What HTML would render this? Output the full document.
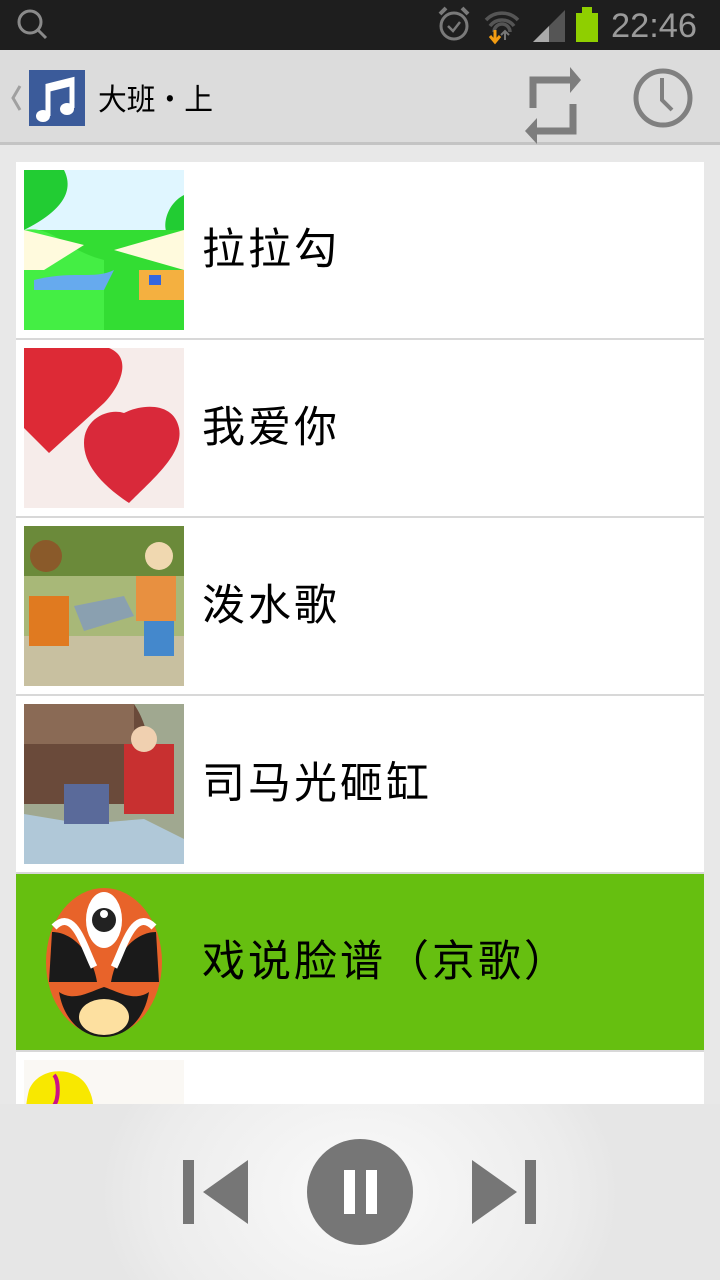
<!DOCTYPE html>
<html><head><meta charset="utf-8">
<style>
*{margin:0;padding:0;box-sizing:border-box}
body{width:720px;height:1280px;overflow:hidden;background:#e8e8e8;font-family:"Liberation Sans","Noto Sans CJK SC",sans-serif;position:relative}
.status{position:absolute;left:0;top:0;width:720px;height:50px;background:#1e1e1e}
.bar{position:absolute;left:0;top:50px;width:720px;height:95px;background:#dcdcdc;border-bottom:3px solid #c4c4c4}
.list{position:absolute;left:16px;top:162px;width:688px;height:942px;overflow:hidden;background:#fff}
.row{position:relative;height:178px;border-bottom:2px solid #d8d8d8;background:#fff}
.row.sel{background:#66bf10}
.row svg.th{position:absolute;left:8px;top:8px;width:160px;height:160px}
.row span{position:absolute;left:186px;top:0;line-height:176px;font-size:43px;letter-spacing:3px;color:#000}
.bottom{position:absolute;left:0;top:1104px;width:720px;height:176px;background:radial-gradient(ellipse 260px 200px at 360px 90px,#fafafa,#ececec 80%,#e6e6e6)}
</style></head><body>
<div class="status">
<svg width="720" height="50" style="position:absolute;left:0;top:0">
<circle cx="30" cy="22" r="11" fill="none" stroke="#8a8a8a" stroke-width="3"/>
<line x1="38" y1="30" x2="46" y2="38" stroke="#8a8a8a" stroke-width="3"/>
<circle cx="454" cy="26" r="13" fill="none" stroke="#7a7a7a" stroke-width="3"/>
<path d="M448 26l5 5 7-9" fill="none" stroke="#7a7a7a" stroke-width="2.5"/>
<path d="M440 14l6-6M468 14l-6-6" stroke="#7a7a7a" stroke-width="4"/>
<path d="M486 20a22 22 0 0 1 32 0M490 26a15 15 0 0 1 24 0M494 32a8 8 0 0 1 16 0" fill="none" stroke="#555" stroke-width="3.5"/>
<path d="M495 30v10M490 36l5 6 5-6" fill="none" stroke="#f39c12" stroke-width="3"/>
<path d="M505 40v-8M501 35l4-4 4 4" fill="none" stroke="#777" stroke-width="2"/>
<path d="M533 42L565 10V42Z" fill="#555"/>
<path d="M533 42l16-16v16z" fill="#aaa"/>
<rect x="576" y="13" width="22" height="29" fill="#8fcf00"/><rect x="582" y="7" width="10" height="6" fill="#8fcf00"/>
<text x="611" y="37" font-family="Liberation Sans" font-size="34" fill="#9a9a9a" textLength="86" lengthAdjust="spacingAndGlyphs">22:46</text>
</svg>
</div>
<div class="bar">
<svg width="720" height="95" style="position:absolute;left:0;top:0">
<path d="M20 36l-7 12 7 12" fill="none" stroke="#a0a0a0" stroke-width="3"/>
<rect x="29" y="20" width="56" height="56" fill="#3b5b9a"/>
<path d="M48 66V36l24-6v28" fill="none" stroke="#fff" stroke-width="5"/>
<path d="M48 36l24-6v6l-24 6z" fill="#fff"/>
<ellipse cx="43" cy="66" rx="7" ry="6" fill="#fff"/><ellipse cx="67" cy="59" rx="7" ry="6" fill="#fff"/>
<text x="98" y="60" font-family="Noto Sans CJK SC" font-size="30" fill="#000" textLength="115" lengthAdjust="spacingAndGlyphs">大班·上</text>
<path d="M533 58V30h38" fill="none" stroke="#7d7d7d" stroke-width="7"/>
<path d="M570 17l11 13-11 13z" fill="#7d7d7d"/>
<path d="M573 54v27h-38" fill="none" stroke="#7d7d7d" stroke-width="7"/>
<path d="M537 68l-12 13 12 13z" fill="#7d7d7d"/>
<circle cx="663" cy="48" r="27" fill="none" stroke="#808080" stroke-width="5"/>
<path d="M662 28v22l10 10" fill="none" stroke="#808080" stroke-width="4"/>
</svg>
</div>
<div class="list">
<div class="row"><svg class="th" viewBox="0 0 160 160"><rect width="160" height="160" fill="#dff5ff"/><rect y="0" width="160" height="60" fill="#e0f6ff"/><path d="M0 0h40c10 20 0 40-40 60z" fill="#22cc33"/><path d="M160 25c-20 10-25 40-10 45h10z" fill="#22cc33"/><rect y="60" width="160" height="100" fill="#33dd33"/><path d="M0 60c30-5 40 20 80 30v70H0z" fill="#44ee44"/><path d="M0 60l60 15-40 25H0z" fill="#fffadd"/><path d="M160 60l-70 20 70 20z" fill="#fffadd"/><path d="M10 110c40-10 60 0 80-10l-10 20H10z" fill="#66aaee"/><rect x="115" y="100" width="45" height="30" fill="#f4b040"/><rect x="125" y="105" width="12" height="10" fill="#3366dd"/></svg><span>拉拉勾</span></div>
<div class="row"><svg class="th" viewBox="0 0 160 160"><rect width="160" height="160" fill="#f6ecea"/><path d="M0 0h35c15-5 35-5 50 0 25 10 10 40-5 55L25 105 0 80z" fill="#dd2a36"/><path d="M100 65c20-10 50-10 55 15 5 25-25 50-50 75-30-20-45-40-45-60 0-25 25-35 40-30z" fill="#d9293a"/></svg><span>我爱你</span></div>
<div class="row"><svg class="th" viewBox="0 0 160 160"><rect width="160" height="160" fill="#a8b878"/><rect width="160" height="50" fill="#6b8a3a"/><rect y="110" width="160" height="50" fill="#c8c0a0"/><circle cx="22" cy="30" r="16" fill="#8a5a2a"/><rect x="5" y="70" width="40" height="50" fill="#e07a20"/><circle cx="135" cy="30" r="14" fill="#f0d8b0"/><rect x="112" y="50" width="40" height="45" fill="#e89040"/><rect x="120" y="95" width="30" height="35" fill="#4488cc"/><path d="M50 80l50-10 10 20-50 15z" fill="#8aa0b0"/></svg><span>泼水歌</span></div>
<div class="row"><svg class="th" viewBox="0 0 160 160"><rect width="160" height="160" fill="#a0a890"/><path d="M0 0h110c20 30 20 70 0 100H0z" fill="#6a4a3a"/><rect x="0" y="0" width="110" height="40" fill="#8a6a55"/><rect x="100" y="40" width="50" height="70" fill="#c83030"/><circle cx="120" cy="35" r="13" fill="#f0d0b0"/><path d="M0 110l60 10 60-5 40 20v25H0z" fill="#b0c8d8"/><rect x="40" y="80" width="45" height="40" fill="#5a6a9a"/></svg><span>司马光砸缸</span></div>
<div class="row sel"><svg class="th" viewBox="0 0 160 160"><ellipse cx="80" cy="80" rx="58" ry="74" fill="#e8632a"/><path d="M28 50c20 0 40 20 45 50H25z" fill="#1a1a1a"/><path d="M132 50c-20 0-40 20-45 50h48z" fill="#1a1a1a"/><path d="M30 45c20-20 30 20 40 40" fill="none" stroke="#fff" stroke-width="7"/><path d="M130 45c-20-20-30 20-40 40" fill="none" stroke="#fff" stroke-width="7"/><ellipse cx="80" cy="38" rx="18" ry="28" fill="#fff"/><circle cx="80" cy="38" r="12" fill="#222"/><circle cx="80" cy="32" r="4" fill="#fff"/><path d="M35 110c15 10 30 0 45-5 15 5 30 15 45 5-5 30-25 45-45 45s-40-15-45-45z" fill="#1a1a1a"/><ellipse cx="80" cy="135" rx="25" ry="18" fill="#fde0a0"/></svg><span>戏说脸谱（京歌）</span></div>
<div class="row"><svg class="th" viewBox="0 0 160 160"><rect width="160" height="160" fill="#faf8f4"/><path d="M5 30c10-25 50-25 60 0 10 20 0 40-5 60H10C0 70 0 50 5 30z" fill="#f8e800"/><path d="M30 15c5 5 5 25 0 30" stroke="#cc1188" stroke-width="4" fill="none"/><path d="M0 70h60v20H0z" fill="#ff8a20"/></svg><span></span></div>
</div>
<div class="bottom">
<svg width="720" height="176" style="position:absolute;left:0;top:0">
<rect x="183" y="56" width="11" height="64" fill="#767676"/>
<path d="M248 56v64l-45-32z" fill="#767676"/>
<circle cx="360" cy="88" r="53" fill="#767676"/>
<rect x="344" y="66" width="11" height="44" fill="#fff"/><rect x="366" y="66" width="11" height="44" fill="#fff"/>
<path d="M472 56v64l45-32z" fill="#767676"/>
<rect x="525" y="56" width="11" height="64" fill="#767676"/>
</svg>
</div>
</body></html>
